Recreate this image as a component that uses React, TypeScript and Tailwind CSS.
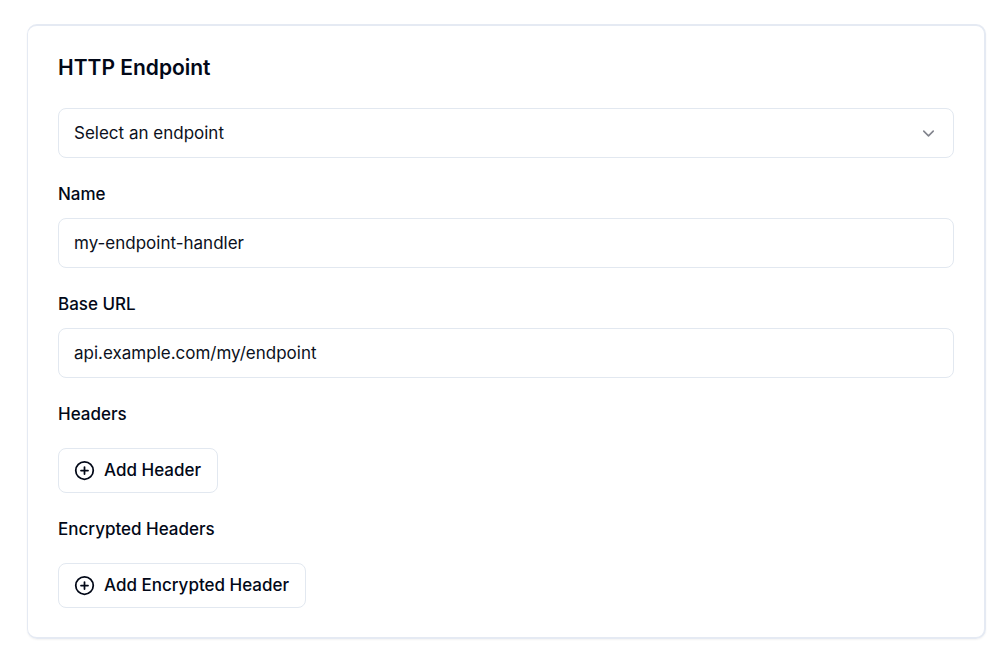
import { ChevronDown, CirclePlus } from "lucide-react";

const fieldClass =
  "h-[50px] w-full rounded-lg border border-slate-200 bg-white px-[15px] text-[17px] leading-6 text-[#0b1020] outline-none focus:border-slate-400";

function TextField({ id, label, value }: { id: string; label: string; value: string }) {
  return (
    <div className="flex flex-col gap-3">
      <label htmlFor={id} className="text-[17px] leading-6 font-medium">
        {label}
      </label>
      <input id={id} type="text" defaultValue={value} className={fieldClass} />
    </div>
  );
}

function HeaderGroup({ title, action }: { title: string; action: string }) {
  return (
    <section className="flex flex-col items-start gap-[22px]">
      <h3 className="text-[17px] leading-6 font-medium">{title}</h3>
      <button
        type="button"
        className="flex h-[45px] items-center gap-[9px] rounded-lg border border-slate-200 bg-white pr-4 pl-[15px] text-[17px] font-medium hover:bg-slate-50"
      >
        <CirclePlus size={21} strokeWidth={2} aria-hidden="true" />
        {action}
      </button>
    </section>
  );
}

export default function App() {
  return (
    <main className="min-h-screen bg-white pt-6 pr-[14px] pb-[14px] pl-[27px] font-['Inter',sans-serif] text-[#020817]">
      <form className="flex flex-col gap-6 rounded-[10px] border-2 border-l border-[#e5eaf3] pt-[26px] pr-[30px] pb-[29px] pl-[30px] shadow-xs">
        <h2 className="text-[21px] leading-8 font-semibold">HTTP Endpoint</h2>
        <div className="relative">
          <select aria-label="Endpoint" className={`${fieldClass} appearance-none`}>
            <option>Select an endpoint</option>
          </select>
          <ChevronDown
            size={19}
            strokeWidth={2}
            aria-hidden="true"
            className="pointer-events-none absolute top-4 right-4 text-[#82848d]"
          />
        </div>
        <TextField id="name" label="Name" value="my-endpoint-handler" />
        <TextField id="base-url" label="Base URL" value="api.example.com/my/endpoint" />
        <HeaderGroup title="Headers" action="Add Header" />
        <HeaderGroup title="Encrypted Headers" action="Add Encrypted Header" />
      </form>
    </main>
  );
}
